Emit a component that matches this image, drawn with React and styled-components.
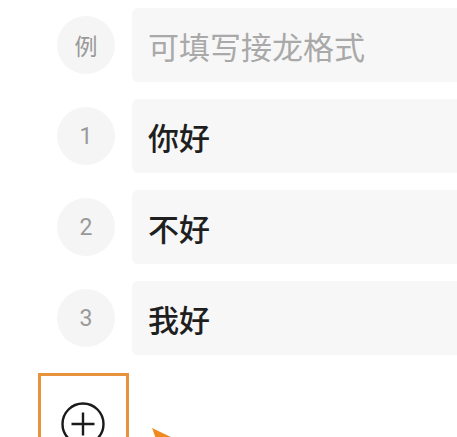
import styled, { createGlobalStyle } from 'styled-components'

const GlobalStyle = createGlobalStyle`
  html, body {
    margin: 0;
    padding: 0;
    background: #ffffff;
    overflow: hidden;
  }
  body {
    font-family: Roboto, "Noto Sans CJK SC", sans-serif;
  }
`

const Page = styled.div`
  width: 457px;
  height: 437px;
  overflow: hidden;
  padding-top: 8px;
  box-sizing: border-box;
`

const List = styled.div`
  display: flex;
  flex-direction: column;
  gap: 17px;
`

const Row = styled.div`
  display: flex;
  align-items: center;
  gap: 17px;
  padding-left: 57px;
`

const Badge = styled.div`
  flex: none;
  width: 58px;
  height: 58px;
  border-radius: 50%;
  background: #f5f5f5;
  color: #999999;
  font-size: 23px;
  display: flex;
  align-items: center;
  justify-content: center;
`

const Field = styled.div`
  flex: 1;
  height: 74px;
  margin-right: -20px;
  border-radius: 6px;
  background: #f7f7f7;
  display: flex;
  align-items: center;
  padding-left: 16px;
  font-family: "Noto Sans CJK SC", sans-serif;
  font-size: 31px;
  font-weight: ${(p) => (p.$placeholder ? 400 : 500)};
  color: ${(p) => (p.$placeholder ? '#a9a9a9' : '#1f1f1f')};
`

const Footer = styled.div`
  display: flex;
  align-items: flex-start;
  gap: 22px;
  margin-top: 18px;
  padding-left: 38px;
`

const Highlight = styled.div`
  width: 91px;
  height: 80px;
  box-sizing: border-box;
  border: 3px solid #e8923c;
  border-bottom: none;
  display: flex;
  justify-content: center;
  padding-top: 26px;
  padding-right: 2px;
`

const AddButton = styled.button`
  border: none;
  background: none;
  padding: 0;
  width: 44px;
  height: 44px;
  cursor: pointer;
`

const Pointer = styled.svg`
  flex: none;
  margin-top: 54px;
`

const rows = [
  { label: '例', text: '可填写接龙格式', placeholder: true },
  { label: '1', text: '你好' },
  { label: '2', text: '不好' },
  { label: '3', text: '我好' },
]

export default function App() {
  return (
    <>
      <GlobalStyle />
      <Page>
        <List>
          {rows.map((r) => (
            <Row key={r.label}>
              <Badge>{r.label}</Badge>
              <Field $placeholder={r.placeholder}>{r.text}</Field>
            </Row>
          ))}
        </List>
        <Footer>
          <Highlight>
            <AddButton aria-label="add">
              <svg width="44" height="44" viewBox="0 0 44 44" fill="none">
                <circle cx="22" cy="22" r="20.5" stroke="#1a1a1a" strokeWidth="2.4" />
                <path d="M10.5 22H33.5M22 10.5V33.5" stroke="#1a1a1a" strokeWidth="2.4" />
              </svg>
            </AddButton>
          </Highlight>
          <Pointer width="30" height="20" viewBox="0 0 30 20">
            <polygon points="1,1 24,12 8,20" fill="#ee8a1e" />
          </Pointer>
        </Footer>
      </Page>
    </>
  )
}
